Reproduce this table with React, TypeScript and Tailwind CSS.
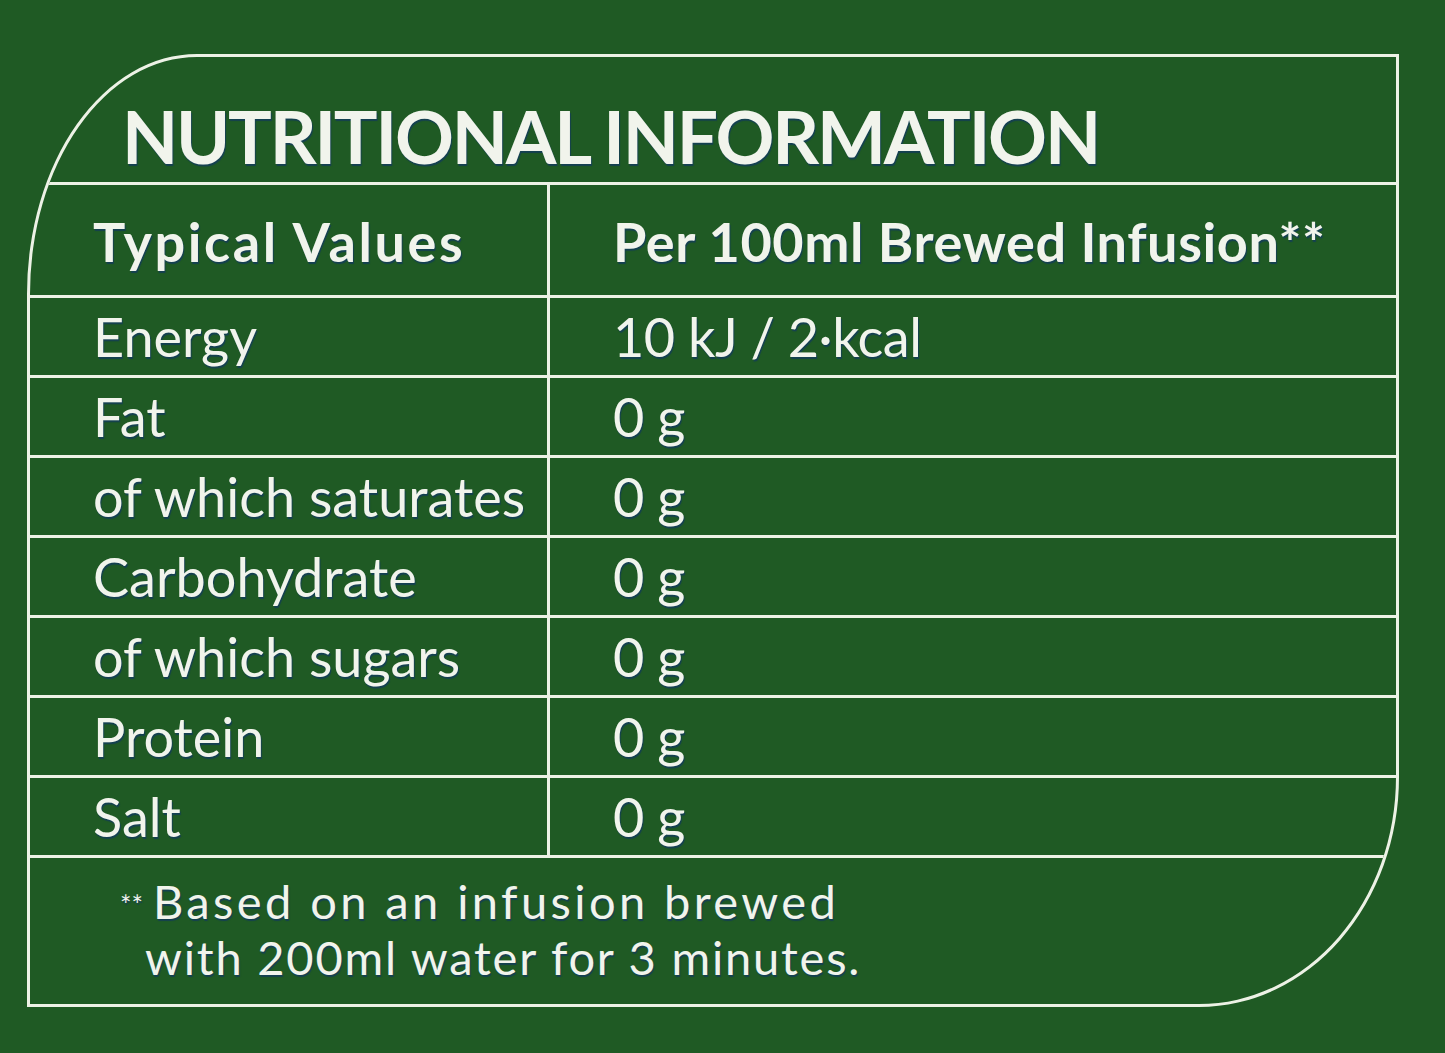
const rows = [
  { label: "Energy", value: "10 kJ / 2·kcal" },
  { label: "Fat", value: "0 g" },
  { label: "of which saturates", value: "0 g" },
  { label: "Carbohydrate", value: "0 g" },
  { label: "of which sugars", value: "0 g" },
  { label: "Protein", value: "0 g" },
  { label: "Salt", value: "0 g" },
];

const shadow = "[text-shadow:1px_2px_1px_rgba(18,56,96,0.75)]";

export default function App() {
  return (
    <div className="w-[1445px] h-[1053px] bg-[#1f5a24] pl-[27px] pt-[54px] font-['Lato',sans-serif] text-[#f1f4ec]">
      <div className="w-[1372px] h-[953px] border-[3px] border-[#edf2e6] rounded-tl-[170px_240px] rounded-br-[200px_230px] overflow-hidden flex flex-col">
        <div className={`h-[125px] flex items-start pt-[49px] pl-[92px] ${shadow}`}>
          <h1 className="text-[73px] leading-[60px] font-bold tracking-[-2.2px]">NUTRITIONAL INFORMATION</h1>
        </div>

        <div className="grid grid-cols-[517px_1fr] h-[113px] border-t-[3px] border-[#edf2e6]">
          <div className={`flex items-center pl-[63px] pt-[2px] text-[54px] font-bold tracking-[2.6px] ${shadow}`}>Typical Values</div>
          <div className={`flex items-center pl-[63px] pt-[2px] text-[54px] font-bold tracking-[0.6px] border-l-[3px] border-[#edf2e6] ${shadow}`}>
            Per 100ml Brewed Infusion**
          </div>
        </div>

        {rows.map((r) => (
          <div key={r.label} className="grid grid-cols-[517px_1fr] h-[80px] border-t-[3px] border-[#edf2e6]">
            <div className={`flex items-center pl-[63px] pt-[1px] text-[54px] leading-none ${shadow}`}>{r.label}</div>
            <div className={`flex items-center pl-[63px] pt-[1px] text-[54px] leading-none tracking-[-0.5px] border-l-[3px] border-[#edf2e6] ${shadow}`}>
              {r.value}
            </div>
          </div>
        ))}

        <div className={`flex-1 border-t-[3px] border-[#edf2e6] pt-[15px] pl-[90px] text-[47px] leading-[56px] ${shadow}`}>
          <p className="tracking-[3.4px]">
            <span className="text-[27px] align-top relative top-[4px] mr-[10px] tracking-[0px]">**</span>Based on an infusion brewed
          </p>
          <p className="pl-[25px] tracking-[1.8px]">with 200ml water for 3 minutes.</p>
        </div>
      </div>
    </div>
  );
}
